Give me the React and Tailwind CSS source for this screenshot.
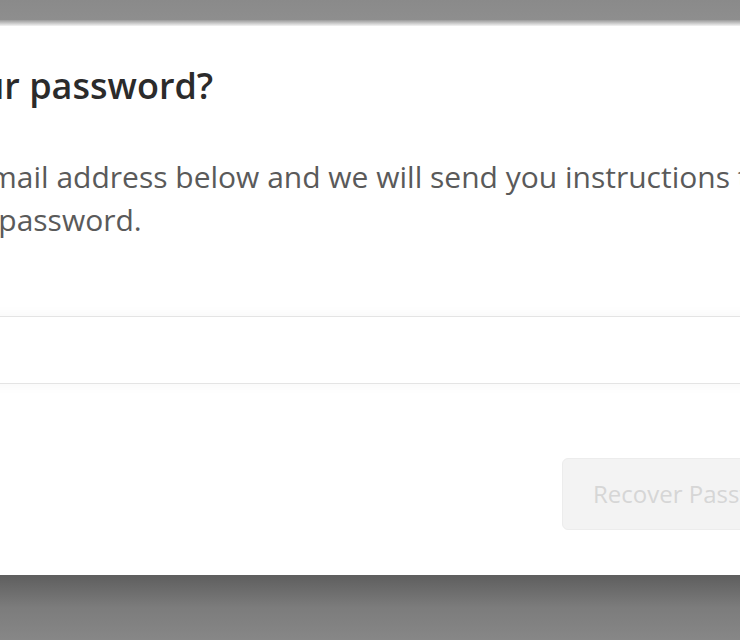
import React from 'react';

// Cropped "forgot password" modal over a dimmed backdrop
const App = () => {
    return (
        <div className="w-[740px] h-[640px] overflow-hidden bg-[#858585] flex flex-col" style={{ fontFamily: '"Open Sans", "Noto Sans", sans-serif' }}>
            <div className="h-[20px] shrink-0 bg-gradient-to-b from-[#8a8a8a] to-[#8e8e8e]" />
            <div className="h-[6px] shrink-0 bg-gradient-to-b from-[#9a9a9a] to-[#f4f4f4]" />

            {/* modal */}
            <div className="shrink-0 -ml-[202px] w-[1200px] h-[549px] bg-white pl-[20px] pt-[38px]">
                <h2 className="text-[36px] leading-[44px] font-semibold text-[#2b2b2b]">Forgot your password?</h2>
                <p className="mt-[47px] w-[1100px] text-[30px] leading-[43px] text-[#5a5a5a]">
                    Enter your email address below and we will send you instructions to<br />
                    change your password.
                </p>
                <div className="mt-[75px] w-[1150px] h-[68px] border border-[#e4e4e4] rounded-md bg-white shadow-[0_0_14px_rgba(0,0,0,0.04)]" />
                <div className="mt-[74px] ml-[744px] w-[300px] h-[72px] rounded-md bg-[#f3f3f3] border border-[#ececec] flex items-center px-[30px] text-[24px] text-[#d6d6d6]">
                    Recover Password
                </div>
            </div>

            <div className="flex-1 bg-gradient-to-b from-[#5e5e5e] via-[#7c7c7c] to-[#878787]" />
        </div>
    );
};

export default App;
